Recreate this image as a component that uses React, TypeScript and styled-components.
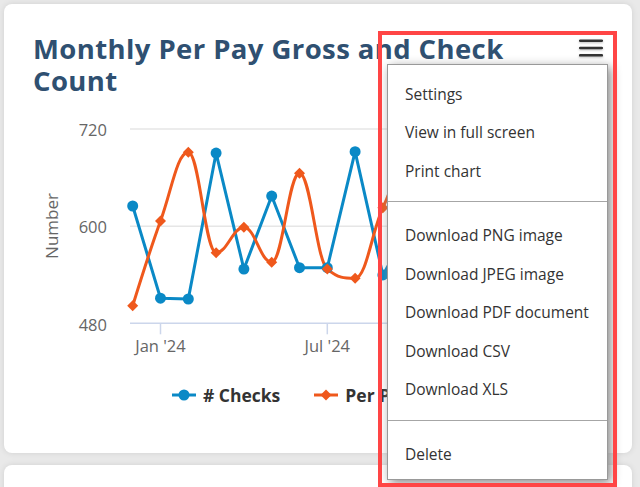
import React from 'react';
import styled, { createGlobalStyle } from 'styled-components';

const GlobalStyle = createGlobalStyle`
    html, body {
        margin: 0;
        padding: 0;
        background: #e9e9e9;
        font-family: 'Open Sans', 'Noto Sans', sans-serif;
    }
`;

const BLUE = '#0a89c6';
const ORANGE = '#ef581c';

// chart geometry, in svg coords (svg starts at page x=33, y=100)
const PLOT_LEFT = 97;
const PLOT_RIGHT = 567;
const Y_MIN = 480;
const Y_MAX = 720;
const Y_TOP = 29;
const Y_BOTTOM = 223.3;
const X_START = 99.7;
const X_STEP = 27.8;

const checks = [624.9, 511, 510, 690.3, 547, 637.2, 548.7, 548.7, 692, 539.7, 600, 660, 560, 620, 580, 650, 590];
const gross = [501.7, 606.3, 691.2, 567.2, 598.6, 555.3, 665.3, 547, 535.6, 622.8, 685, 560, 640, 590, 670, 550, 620];

const yOf = (v: number) => Y_BOTTOM - ((v - Y_MIN) / (Y_MAX - Y_MIN)) * (Y_BOTTOM - Y_TOP);
const toPoints = (vals: number[]) => vals.map((v, i) => ({ x: X_START + i * X_STEP, y: yOf(v) }));

type Pt = { x: number; y: number };

const linePath = (pts: Pt[]) => pts.map((p, i) => `${i ? 'L' : 'M'}${p.x},${p.y}`).join(' ');

// highcharts-like spline
const splinePath = (pts: Pt[]) => {
    const sm = 1.5;
    const den = 2.5;
    const conts = pts.map((p, i) => {
        if (i === 0 || i === pts.length - 1) return { lx: p.x, ly: p.y, rx: p.x, ry: p.y };
        const a = pts[i - 1];
        const b = pts[i + 1];
        const lx = (sm * p.x + a.x) / den;
        let ly = (sm * p.y + a.y) / den;
        const rx = (sm * p.x + b.x) / den;
        let ry = (sm * p.y + b.y) / den;
        if (rx !== lx) {
            const c = ((ry - ly) * (rx - p.x)) / (rx - lx) + p.y - ry;
            ly += c;
            ry += c;
        }
        if (ly > a.y && ly > p.y) {
            ly = Math.max(a.y, p.y);
            ry = 2 * p.y - ly;
        } else if (ly < a.y && ly < p.y) {
            ly = Math.min(a.y, p.y);
            ry = 2 * p.y - ly;
        }
        if (ry > b.y && ry > p.y) {
            ry = Math.max(b.y, p.y);
            ly = 2 * p.y - ry;
        } else if (ry < b.y && ry < p.y) {
            ry = Math.min(b.y, p.y);
            ly = 2 * p.y - ry;
        }
        return { lx, ly, rx, ry };
    });
    let d = `M${pts[0].x},${pts[0].y}`;
    for (let i = 1; i < pts.length; i++) {
        d += ` C${conts[i - 1].rx},${conts[i - 1].ry} ${conts[i].lx},${conts[i].ly} ${pts[i].x},${pts[i].y}`;
    }
    return d;
};

const diamond = (x: number, y: number, r: number) => `M${x},${y - r} L${x + r},${y} L${x},${y + r} L${x - r},${y} Z`;

const Page = styled.div`
    position: relative;
    padding: 4px 8px 4px 4px;
    display: flex;
    flex-direction: column;
    gap: 12px;
    height: 487px;
    box-sizing: border-box;
    overflow: hidden;
`;
const Card = styled.div`
    position: relative;
    flex-shrink: 0;
    height: 449px;
    box-sizing: border-box;
    padding: 29px 29px 0;
    background: #fff;
    border-radius: 8px;
    box-shadow: 0 0 6px rgba(0, 0, 0, 0.1);
`;
const BlankCard = styled(Card)`
    height: 120px;
`;
const Header = styled.div`
    display: flex;
    justify-content: space-between;
    align-items: flex-start;
    gap: 16px;
`;
const Title = styled.h2`
    margin: 0;
    max-width: 520px;
    font-size: 27.5px;
    line-height: 31.5px;
    letter-spacing: 0.4px;
    font-weight: 700;
    color: #2f5071;
`;
const MenuButton = styled.svg`
    flex-shrink: 0;
    margin-top: 3px;
    filter: drop-shadow(0 1px 1px rgba(0, 0, 0, 0.25));
`;
const ChartSvg = styled.svg`
    display: block;
    margin-top: 4px;
    overflow: visible;
`;
const AxisText = styled.text`
    font-family: 'Open Sans', sans-serif;
    font-size: 16.5px;
    fill: #666;
`;
const Legend = styled.div`
    display: flex;
    justify-content: center;
    gap: 34px;
    margin-top: 23px;
    height: 24px;
`;
const LegendItem = styled.div`
    display: flex;
    align-items: center;
    gap: 7px;
`;
const LegendLabel = styled.span`
    font-size: 17.5px;
    line-height: 24px;
    font-weight: 700;
    color: #333;
    white-space: nowrap;
`;
const Menu = styled.div`
    position: absolute;
    top: 60px;
    right: 24px;
    width: 221px;
    box-sizing: border-box;
    padding: 9.5px 0 5px;
    background: #fff;
    border: 1px solid #999;
    box-shadow: 3px 3px 10px #888;
    z-index: 10;
`;
const MenuItem = styled.div`
    padding: 8px 17px;
    font-size: 15.5px;
    line-height: 22.5px;
    color: #333;
    white-space: nowrap;
`;
const MenuDivider = styled.div`
    height: 1px;
    margin: 10.8px 0 14.7px;
    background: #a6a6a6;
`;
const Highlight = styled.div`
    position: absolute;
    left: 378px;
    top: 31px;
    width: 239px;
    height: 456px;
    box-sizing: border-box;
    border: 4.5px solid #ff4545;
    pointer-events: none;
    z-index: 20;
`;

const LegendSymbol: React.FC<{ color: string; shape: 'circle' | 'diamond' }> = ({ color, shape }) => (
    <svg width="24" height="14" viewBox="0 0 24 14">
        <line x1="0" y1="7" x2="24" y2="7" stroke={color} strokeWidth="3" />
        {shape === 'circle' ? <circle cx="12" cy="7" r="5.5" fill={color} /> : <path d={diamond(12, 7, 5.5)} fill={color} />}
    </svg>
);

const Chart: React.FC = () => {
    const blue = toPoints(checks);
    const orange = toPoints(gross);
    const grid = [720, 600];
    const ticks = [
        { x: X_START + X_STEP, label: "Jan '24" },
        { x: X_START + 7 * X_STEP, label: "Jul '24" },
    ];
    return (
        <ChartSvg width="570" height="260" viewBox="0 0 570 260">
            {grid.map((g) => (
                <line key={g} x1={PLOT_LEFT} x2={PLOT_RIGHT} y1={yOf(g)} y2={yOf(g)} stroke="#e6e6e6" strokeWidth="1.5" />
            ))}
            <line x1={PLOT_LEFT} x2={PLOT_RIGHT} y1={Y_BOTTOM} y2={Y_BOTTOM} stroke="#ccd6eb" strokeWidth="1.5" />
            {ticks.map((t) => (
                <g key={t.label}>
                    <line x1={t.x} x2={t.x} y1={Y_BOTTOM} y2={Y_BOTTOM + 11} stroke="#ccd6eb" strokeWidth="1.5" />
                    <AxisText x={t.x} y={251.7} textAnchor="middle">
                        {t.label}
                    </AxisText>
                </g>
            ))}
            {[720, 600, 480].map((v) => (
                <AxisText key={v} x={74} y={yOf(v) + 7.3} textAnchor="end">
                    {v}
                </AxisText>
            ))}
            <AxisText x={0} y={0} textAnchor="middle" transform="translate(25,126) rotate(-90)" style={{ fontSize: 17 }}>
                Number
            </AxisText>
            <path d={linePath(blue)} fill="none" stroke={BLUE} strokeWidth="3" strokeLinejoin="round" />
            <path d={splinePath(orange)} fill="none" stroke={ORANGE} strokeWidth="3" />
            {blue.map((p, i) => (
                <circle key={i} cx={p.x} cy={p.y} r="5.5" fill={BLUE} />
            ))}
            {orange.map((p, i) => (
                <path key={i} d={diamond(p.x, p.y, 5.5)} fill={ORANGE} />
            ))}
        </ChartSvg>
    );
};

const menuGroups = [
    ['Settings', 'View in full screen', 'Print chart'],
    ['Download PNG image', 'Download JPEG image', 'Download PDF document', 'Download CSV', 'Download XLS'],
    ['Delete'],
];

const App: React.FC = () => (
    <>
        <GlobalStyle />
        <Page>
            <Card>
                <Header>
                    <Title>Monthly Per Pay Gross and Check Count</Title>
                    <MenuButton width="24" height="24" viewBox="0 0 24 24">
                        {[4.7, 12, 19.3].map((y) => (
                            <line key={y} x1="1.2" x2="22.8" y1={y} y2={y} stroke="#333" strokeWidth="2.6" strokeLinecap="round" />
                        ))}
                    </MenuButton>
                </Header>
                <Chart />
                <Legend>
                    <LegendItem>
                        <LegendSymbol color={BLUE} shape="circle" />
                        <LegendLabel># Checks</LegendLabel>
                    </LegendItem>
                    <LegendItem>
                        <LegendSymbol color={ORANGE} shape="diamond" />
                        <LegendLabel>Per Pay Gross</LegendLabel>
                    </LegendItem>
                </Legend>
                <Menu>
                    {menuGroups.map((group, gi) => (
                        <React.Fragment key={gi}>
                            {gi > 0 && <MenuDivider />}
                            {group.map((item) => (
                                <MenuItem key={item}>{item}</MenuItem>
                            ))}
                        </React.Fragment>
                    ))}
                </Menu>
            </Card>
            <BlankCard />
            <Highlight />
        </Page>
    </>
);

export default App;
